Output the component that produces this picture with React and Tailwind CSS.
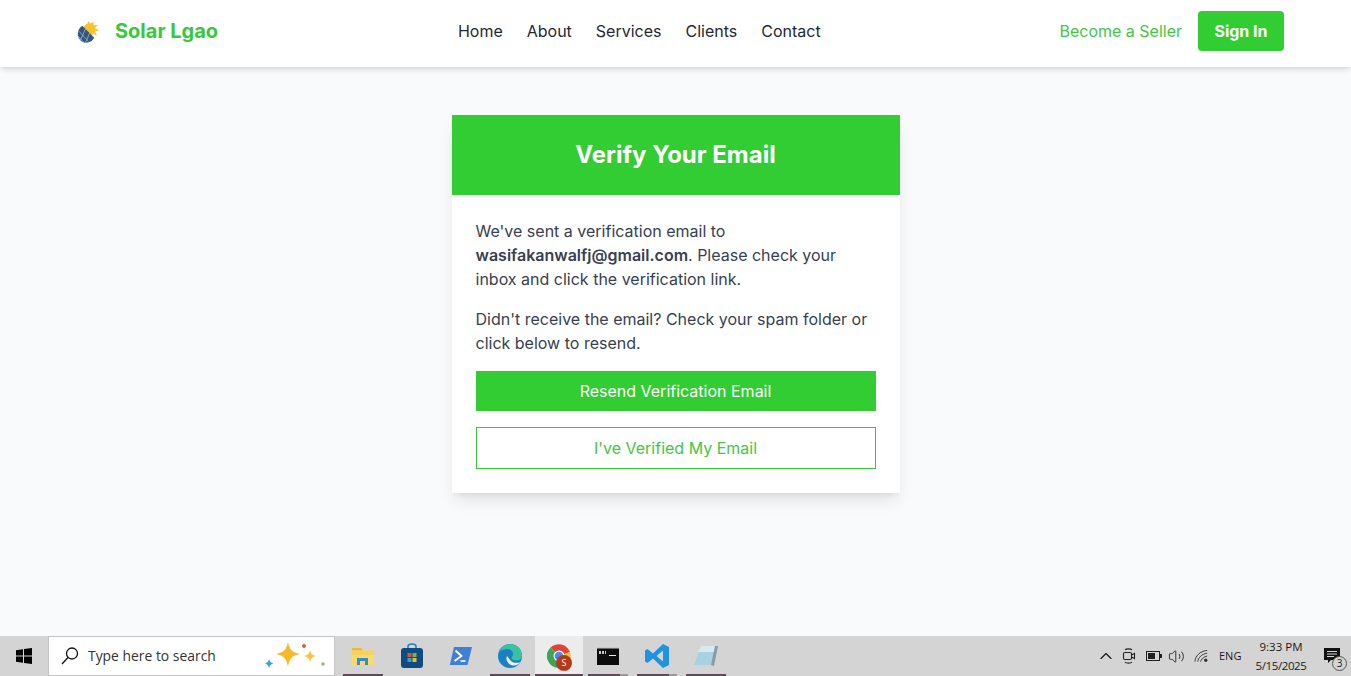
import React from "react";
import { ChevronUp, Volume2 } from "lucide-react";

const NAV_LINKS = ["Home", "About", "Services", "Clients", "Contact"];

// Logo: solar panel with the sun behind it
const SolarLogo = () => (
  <svg width="25" height="25" viewBox="0 -1 24 24">
    <g fill="#f8c22c">
      <circle cx="14" cy="9" r="6" />
      <path d="M13 1l1.500 3-3 .5zM18 1.500l-.5 3.500-2.500-1.500zM22 5l-2.500 2-1-2.500zM23 10l-3.500.5.5-2.500zM21 15l-3-1.500 2-1.500z" />
    </g>
    <path d="M7 5.500 L18.500 17 A8.500 8.500 0 0 1 6.500 20.500 A9 9 0 0 1 7 5.500z" fill="#34557f" />
    <g stroke="#a9bdd4" strokeWidth="0.7" fill="none">
      <path d="M3.500 10.500 L13 20.500M2.500 15 L8.500 21.500M10 8.500 L5 20M14 12.500 L10 22" />
    </g>
  </svg>
);

const SearchGlass = () => (
  <svg width="18" height="18" viewBox="0 0 18 18" fill="none" stroke="#111" strokeWidth="1.300">
    <circle cx="11" cy="6.500" r="5.500" />
    <path d="M7 10.500 L1 17" />
  </svg>
);

const Sparkles = () => (
  <svg width="70" height="30" viewBox="0 0 70 30">
    <path d="M24 1 C25.500 8.500 28 11.500 36 13 C28 14.500 25.500 17.500 24 26 C22.500 17.500 20 14.500 12 13 C20 11.500 22.500 8.500 24 1z" fill="#f6b92a" />
    <path d="M46 9 C46.600 12.500 48.500 14.500 52 15 C48.500 15.500 46.600 17.500 46 21 C45.400 17.500 43.500 15.500 40 15 C43.500 14.500 45.400 12.500 46 9z" fill="#f4c542" />
    <path d="M5 18 C5.500 20.500 6.500 21.500 9.500 22.500 C6.500 23.500 5.500 24.500 5 27.500 C4.500 24.500 3.500 23.500 1 22.500 C3.500 21.500 4.500 20.500 5 18z" fill="#2ea8e0" />
    <circle cx="40" cy="5" r="2" fill="#c8693a" />
    <circle cx="59" cy="23" r="1.800" fill="#8cc063" />
  </svg>
);

const Explorer = () => (
  <svg width="24" height="24" viewBox="0 0 24 24">
    <path d="M1 4h9l2 2.500H1z" fill="#f2b632" />
    <path d="M1 6.500h21.500V21H1z" fill="#fad25a" />
    <path d="M1 11h21.500v10H1z" fill="#fcd96d" />
    <path d="M6 21v-7h11v7h-3v-4H9v4z" fill="#2f8fd6" />
  </svg>
);

const Store = () => (
  <svg width="24" height="26" viewBox="0 0 24 26">
    <path d="M8 6V3.500C8 2 9.500 1 12 1s4 1 4 2.500V6" fill="none" stroke="#2a7fc1" strokeWidth="1.600" />
    <rect x="1" y="5" width="22" height="20" rx="3" fill="#0f4c81" />
    <rect x="7.500" y="10" width="4" height="4" fill="#e8502f" />
    <rect x="12.500" y="10" width="4" height="4" fill="#7cb83f" />
    <rect x="7.500" y="15" width="4" height="4" fill="#2ba4e0" />
    <rect x="12.500" y="15" width="4" height="4" fill="#f6b92a" />
  </svg>
);

const Powershell = () => (
  <svg width="24" height="20" viewBox="0 0 24 20">
    <path d="M5 1h18l-4.500 18H.8z" fill="#3f7fd6" />
    <path d="M6.500 4.500 L12.500 10 L5.500 15" fill="none" stroke="#fff" strokeWidth="1.800" />
    <path d="M11.500 15h5" stroke="#fff" strokeWidth="1.600" />
  </svg>
);

const Edge = () => (
  <svg width="26" height="26" viewBox="0 0 26 26">
    <circle cx="13" cy="13" r="12" fill="#1b7fc4" />
    <path d="M1.500 12C2.500 5 7.500 1 13 1c7 0 12 5 12 11.500 0 3-2.500 5-6 5-2.500 0-4.500-1-4.500-2.500 0-1 1.500-1.500 1.500-4 0-3-3-5-6-5-4 0-8 2-9 6z" fill="#37c2a0" />
    <path d="M10 13c-2 4 1.500 9.500 7 9.500 2.500 0 5-1.500 6-3.500-3 1.500-7 1-9-1-1.500-1.500-2.500-3-4-5z" fill="#e8f4fb" />
  </svg>
);

const Chrome = () => (
  <div className="relative w-[24px] h-[24px]">
    <svg width="24" height="24" viewBox="0 0 24 24">
      <path d="M12 12 L3.500 3.500 A12 12 0 0 1 23 8z" fill="#df4436" />
      <path d="M12 12 L23 8 A12 12 0 0 1 12 24z" fill="#f6c026" />
      <path d="M12 12 L12 24 A12 12 0 0 1 3.500 3.500z" fill="#3ba553" />
      <circle cx="12" cy="12" r="5.500" fill="#fff" />
      <circle cx="12" cy="12" r="4.300" fill="#4a8af0" />
    </svg>
    <span className="absolute left-[9px] top-[11px] w-[16px] h-[16px] rounded-full bg-[#b5391c] text-white text-[9px] leading-[16px] text-center font-['Open_Sans',sans-serif]">S</span>
  </div>
);

const Terminal = () => (
  <svg width="22" height="18" viewBox="0 0 22 18">
    <rect x="0" y="0" width="22" height="18" fill="#0c0c0c" />
    <rect x="0" y="0" width="22" height="1.500" fill="#c9c9c9" />
    <path d="M2 4h2v3H2zM5 4h2v3H5zM8 4h1v3H8z" fill="#c8c8c8" />
    <path d="M12 8h7v1h-7z" fill="#e8e8e8" />
  </svg>
);

const VSCode = () => (
  <svg width="26" height="26" viewBox="0 0 26 26">
    <path d="M19 1 L25 4 V22 L19 25 L9 15.500 L3.500 20 L1 18.500 V7.500 L3.500 6 L9 10.500z M19 7.500 L12.500 13 L19 18.500z" fill="#1f93e0" fillRule="evenodd" />
  </svg>
);

const Notepad = () => (
  <svg width="26" height="22" viewBox="0 0 26 22">
    <path d="M8 1 L24 1 L20 20 L1 20z" fill="#a8d2e0" />
    <path d="M8 1 L24 1 L23 7 L5 7z" fill="#d8eaf0" />
    <path d="M22 1 L25 1 L21 21 L18 20z" fill="#8a9aa0" />
  </svg>
);

// mr is the gap to the next button, the Chrome button sits closer to its neighbours
const TASKBAR_APPS = [
  { icon: <Explorer />, w: "w-[40px]", mr: "mr-[9px]", underline: true },
  { icon: <Store />, w: "w-[40px]", mr: "mr-[9px]" },
  { icon: <Powershell />, w: "w-[40px]", mr: "mr-[9px]" },
  { icon: <Edge />, w: "w-[40px]", mr: "mr-[5px]", underline: true },
  { icon: <Chrome />, w: "w-[48px]", mr: "mr-[5px]", underline: true, active: true },
  { icon: <Terminal />, w: "w-[40px]", mr: "mr-[9px]", underline: true, stacked: true },
  { icon: <VSCode />, w: "w-[40px]", mr: "mr-[9px]", underline: true, stacked: true },
  { icon: <Notepad />, w: "w-[40px]", mr: "", underline: true },
];

const Navbar = () => (
  <header className="h-[67px] shrink-0 bg-white shadow-md flex items-center justify-between pl-[67px] pr-[67px] pb-[5px] relative z-10">
    <div className="flex items-center gap-[8px] pr-[1px]">
      <div className="w-[40px] h-[40px] flex items-center justify-center">
        <SolarLogo />
      </div>
      <span className="text-[20px] font-bold text-[#36c93c]">Solar Lgao</span>
    </div>
    <nav className="flex items-center gap-[24px] text-base text-[#1f2937]">
      {NAV_LINKS.map((link) => (
        <a key={link}>{link}</a>
      ))}
    </nav>
    <div className="flex items-center gap-[16px]">
      <a className="text-base text-[#45c645]">Become a Seller</a>
      <button className="w-[86px] h-[40px] rounded bg-[#32cd32] text-white font-bold text-base">Sign In</button>
    </div>
  </header>
);

const VerifyCard = () => (
  <div className="w-[448px] bg-white shadow-lg">
    <div className="h-[80px] bg-[#32cd32] flex items-center justify-center">
      <h1 className="text-2xl font-bold text-white">Verify Your Email</h1>
    </div>
    <div className="p-6 text-base leading-[24px] text-[#374151]">
      <p className="mb-4">
        We've sent a verification email to <strong className="font-semibold">wasifakanwalfj@gmail.com</strong>. Please check your inbox and click the verification link.
      </p>
      <p className="mb-4">Didn't receive the email? Check your spam folder or click below to resend.</p>
      <button className="w-full h-[40px] bg-[#32cd32] text-white font-normal text-base mb-4">Resend Verification Email</button>
      <button className="w-full h-[42px] border border-[#32cd32] text-[#45c645] font-normal text-base">I've Verified My Email</button>
    </div>
  </div>
);

const Taskbar = () => (
  <footer className="h-[40px] shrink-0 bg-[#d4d4d4] flex items-stretch font-['Open_Sans',sans-serif] text-[#1a1a1a]">
    <div className="w-[48px] flex items-center justify-center">
      <svg width="16" height="16" viewBox="0 0 16 16" fill="#000">
        <path d="M0 2.200 7 1.200V7.500H0zM8 1 16 0V7.500H8zM0 8.500H7V14.800L0 13.800zM8 8.500H16V16L8 15z" />
      </svg>
    </div>
    <div className="w-[287px] bg-white flex items-center pl-[12px] border border-[#c4c4c4]">
      <SearchGlass />
      <span className="ml-[9px] text-[13.9px] text-[#333]">Type here to search</span>
      <div className="ml-auto">
        <Sparkles />
      </div>
    </div>
    <div className="flex items-stretch ml-[8px]">
      {TASKBAR_APPS.map((app, i) => (
        <div key={i} className={`relative ${app.w} ${app.mr} flex items-center justify-center ${app.active ? "bg-[#ececec]" : ""}`}>
          {app.icon}
          {app.underline && <span className="absolute left-0 right-0 bottom-0 h-[2px] bg-[#5f4a55]" />}
          {app.stacked && <span className="absolute right-0 bottom-0 w-[8px] h-[2px] bg-[#a09a9d]" />}
        </div>
      ))}
    </div>
    <div className="ml-auto flex items-center">
      <ChevronUp size={20} strokeWidth={1.4} />
      <svg className="ml-[5px]" width="16" height="18" viewBox="0 0 16 18" fill="none" stroke="#222" strokeWidth="1.100">
        <path d="M4 3C5 1.500 10 1.500 11 3M4 15C5 16.500 10 16.500 11 15" />
        <rect x="2.500" y="5.500" width="8" height="7" rx="1.500" />
        <path d="M10.500 8 L13.500 6.500V11.500L10.500 10" />
      </svg>
      <svg className="ml-[9px]" width="16" height="10" viewBox="0 0 16 10">
        <rect x="0.500" y="0.500" width="13" height="9" fill="none" stroke="#222" />
        <rect x="2" y="2" width="7" height="6" fill="#222" />
        <rect x="14" y="3" width="2" height="4" fill="#222" />
      </svg>
      <Volume2 size={17} strokeWidth={1.2} className="ml-[6px]" />
      <svg className="ml-[9px]" width="15" height="14" viewBox="0 0 16 14" fill="none" stroke="#333" strokeWidth="1">
        <path d="M1 13C1.500 7 6 2 14 1M4 13C4.500 9 8 5 14 4M7 13C7.500 11 10 8 14 7" />
        <circle cx="12.500" cy="11.500" r="1.800" fill="#333" stroke="none" />
      </svg>
      <span className="ml-[10px] text-[11px] w-[24px]">ENG</span>
      <div className="ml-[12px] w-[52px] text-center text-[11.500px] leading-[18px]">
        <div className="mb-[1px]">9:33 PM</div>
        <div className="tracking-[-0.4px]">5/15/2025</div>
      </div>
      <div className="relative ml-[17px] w-[27px] h-[40px]">
        <svg className="absolute left-0 top-[12px]" width="16" height="16" viewBox="0 0 16 16">
          <path d="M0 0H16V12H7L4 15V12H0z" fill="#111" />
          <path d="M3 3.500H13M3 6H13M3 8.500H10" stroke="#d4d4d4" />
        </svg>
        <span className="absolute left-[8px] top-[20px] w-[15px] h-[15px] rounded-full border border-[#555] bg-[#d4d4d4] text-[10px] leading-[13px] text-center">3</span>
      </div>
    </div>
  </footer>
);

export default function App() {
  return (
    <div className="h-screen flex flex-col bg-[#f9fafb] overflow-hidden font-['Inter',sans-serif]">
      <Navbar />
      <main className="flex-1 flex justify-center items-start pt-[48px]">
        <VerifyCard />
      </main>
      <Taskbar />
    </div>
  );
}
